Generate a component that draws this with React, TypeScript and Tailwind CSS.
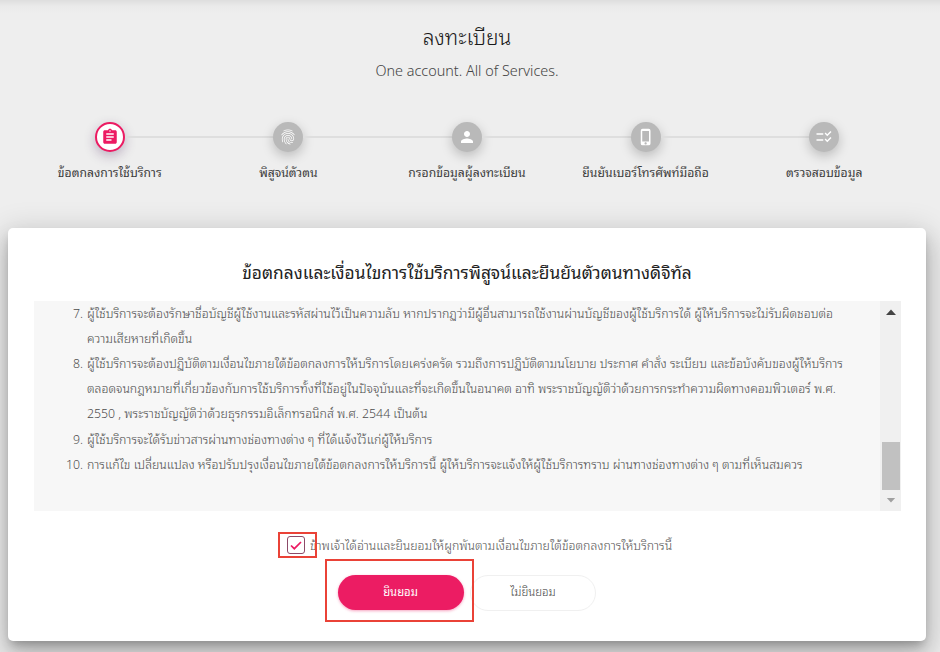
import { Fragment } from "react";
import type { IconType } from "react-icons";
import {
  MdAssignment,
  MdChecklistRtl,
  MdFingerprint,
  MdPerson,
  MdPhoneIphone,
} from "react-icons/md";

type Step = { label: string; Icon: IconType; active?: boolean };

const steps: Step[] = [
  { label: "ข้อตกลงการใช้บริการ", Icon: MdAssignment, active: true },
  { label: "พิสูจน์ตัวตน", Icon: MdFingerprint },
  { label: "กรอกข้อมูลผู้ลงทะเบียน", Icon: MdPerson },
  { label: "ยืนยันเบอร์โทรศัพท์มือถือ", Icon: MdPhoneIphone },
  { label: "ตรวจสอบข้อมูล", Icon: MdChecklistRtl },
];

const terms: { no: number; lines: string[] }[] = [
  {
    no: 7,
    lines: [
      "ผู้ใช้บริการจะต้องรักษาชื่อบัญชีผู้ใช้งานและรหัสผ่านไว้เป็นความลับ หากปรากฏว่ามีผู้อื่นสามารถใช้งานผ่านบัญชีของผู้ใช้บริการได้ ผู้ให้บริการจะไม่รับผิดชอบต่อ",
      "ความเสียหายที่เกิดขึ้น",
    ],
  },
  {
    no: 8,
    lines: [
      "ผู้ใช้บริการจะต้องปฏิบัติตามเงื่อนไขภายใต้ข้อตกลงการให้บริการโดยเคร่งครัด รวมถึงการปฏิบัติตามนโยบาย ประกาศ คำสั่ง ระเบียบ และข้อบังคับของผู้ให้บริการ",
      "ตลอดจนกฎหมายที่เกี่ยวข้องกับการใช้บริการทั้งที่ใช้อยู่ในปัจจุบันและที่จะเกิดขึ้นในอนาคต อาทิ พระราชบัญญัติว่าด้วยการกระทำความผิดทางคอมพิวเตอร์ พ.ศ.",
      "2550 , พระราชบัญญัติว่าด้วยธุรกรรมอิเล็กทรอนิกส์ พ.ศ. 2544 เป็นต้น",
    ],
  },
  { no: 9, lines: ["ผู้ใช้บริการจะได้รับข่าวสารผ่านทางช่องทางต่าง ๆ ที่ได้แจ้งไว้แก่ผู้ให้บริการ"] },
  {
    no: 10,
    lines: [
      "การแก้ไข เปลี่ยนแปลง หรือปรับปรุงเงื่อนไขภายใต้ข้อตกลงการให้บริการนี้ ผู้ให้บริการจะแจ้งให้ผู้ใช้บริการทราบ ผ่านทางช่องทางต่าง ๆ ตามที่เห็นสมควร",
    ],
  },
];

function Stepper() {
  return (
    <ol className="mx-auto mt-[41px] flex w-[893px]">
      {steps.map(({ label, Icon, active }, i) => (
        <li key={label} className="flex flex-1 flex-col items-center">
          <div className="flex w-full items-center">
            <span className={i === 0 ? "h-0.5 flex-1" : "h-0.5 flex-1 bg-[#dedede]"} />
            <span
              className={
                active
                  ? "flex size-[30px] items-center justify-center rounded-full border-2 border-[#ec1a62] bg-white text-[#ec1a62] shadow-[0_4px_12px_rgba(70,30,90,0.3)]"
                  : "flex size-[30px] items-center justify-center rounded-full bg-[#b9b9b9] text-white shadow-[0_4px_12px_rgba(0,0,0,0.22)]"
              }
            >
              <Icon className="size-[18px] shrink-0" />
            </span>
            <span className={i === steps.length - 1 ? "h-0.5 flex-1" : "h-0.5 flex-1 bg-[#dedede]"} />
          </div>
          <span className="mt-[9px] whitespace-nowrap text-[12.2px] leading-[22px] font-normal text-[#3c3c3c]">
            {label}
          </span>
        </li>
      ))}
    </ol>
  );
}

function Scrollbar() {
  return (
    <div className="flex w-[21px] shrink-0 flex-col items-center bg-[#f0f0f0] pt-2 pb-2">
      <svg viewBox="0 0 10 6" className="h-1.5 w-2.5 fill-[#444]"><path d="M0 6 5 0.5 10 6z" /></svg>
      <span className="mt-auto mb-2 h-12 w-[18px] bg-[#c1c1c1]" />
      <svg viewBox="0 0 10 6" className="h-[5px] w-2.5 fill-[#a0a0a0]"><path d="M0 0 5 5.5 10 0z" /></svg>
    </div>
  );
}

export default function App() {
  return (
    <div className="h-[652px] w-[940px] overflow-hidden bg-[linear-gradient(to_bottom,#dedede,#eaeaea_6px,#eeeeee_14px)] font-['Noto_Sans_Thai_Looped','Open_Sans',sans-serif] font-light">
      <div className="w-[934px]">
        <header className="pt-5 text-center">
          <h1 className="text-[21px] leading-8 text-[#1a1a1a]">ลงทะเบียน</h1>
          <p className="mt-[7px] text-[14.4px] leading-[22px] text-[#444]">One account. All of Services.</p>
        </header>

        <Stepper />
      </div>

      <main className="mt-[45px] ml-2 flex h-[413px] w-[918px] flex-col rounded-[5px] bg-white shadow-[0_16px_24px_2px_rgba(0,0,0,0.14),0_6px_30px_5px_rgba(0,0,0,0.14),0_6px_10px_-3px_rgba(0,0,0,0.25)]">
        <h2 className="mt-7 text-center text-[17.35px] leading-[30px] font-normal text-[#222]">
          ข้อตกลงและเงื่อนไขการใช้บริการพิสูจน์และยืนยันตัวตนทางดิจิทัล
        </h2>

        <section className="mt-[15px] ml-[26px] flex h-[210px] w-[867px] overflow-hidden bg-[#f7f7f7]">
          <div className="-mt-[1.5px] grid flex-1 grid-cols-[49px_1fr] content-start gap-x-1 text-[12.3px] leading-[25.2px] whitespace-nowrap text-[#4c4c4c]">
            {terms.map(({ no, lines }) => (
              <Fragment key={no}>
                <span className="text-right">{no}.</span>
                <div>
                  {lines.map((line) => (
                    <p key={line}>{line}</p>
                  ))}
                </div>
              </Fragment>
            ))}
          </div>
          <Scrollbar />
        </section>

        <label className="mt-[21px] ml-[270px] flex h-[26px] items-center text-[12.3px] text-[#555]">
          <span className="relative flex h-[26px] w-[39px] items-center pl-[9px]">
            <span className="flex size-[18px] items-center justify-center rounded-[3px] border border-[#8c4a68] bg-white">
              <svg viewBox="0 0 12 9" className="h-[9px] w-3 fill-none stroke-[#ec1a62] stroke-[1.7]">
                <path d="M1 4.5 4.3 7.7 11 1" />
              </svg>
            </span>
            <span className="absolute inset-0 border-2 border-[#ea4237]" />
          </span>
          <span className="-ml-[7px] whitespace-nowrap">
            ข้าพเจ้าได้อ่านและยินยอมให้ผูกพันตามเงื่อนไขภายใต้ข้อตกลงการให้บริการนี้
          </span>
        </label>

        <div className="mt-px ml-[317px] flex items-center">
          <div className="z-10 flex h-[63px] w-[149px] items-center justify-center border-2 border-[#ea4237] pt-1 pl-0.5">
            <button className="h-[35px] w-[126px] rounded-full bg-[#ec1c63] pb-[3px] text-[11.3px] font-normal text-white shadow-[0_1px_3px_rgba(236,28,99,0.4)]">
              ยินยอม
            </button>
          </div>
          <button className="mt-1 -ml-1 h-9 w-[126px] rounded-full border border-[#f0f0f0] bg-white pb-0.5 text-[11.5px] font-light text-[#444]">
            ไม่ยินยอม
          </button>
        </div>
      </main>
    </div>
  );
}
